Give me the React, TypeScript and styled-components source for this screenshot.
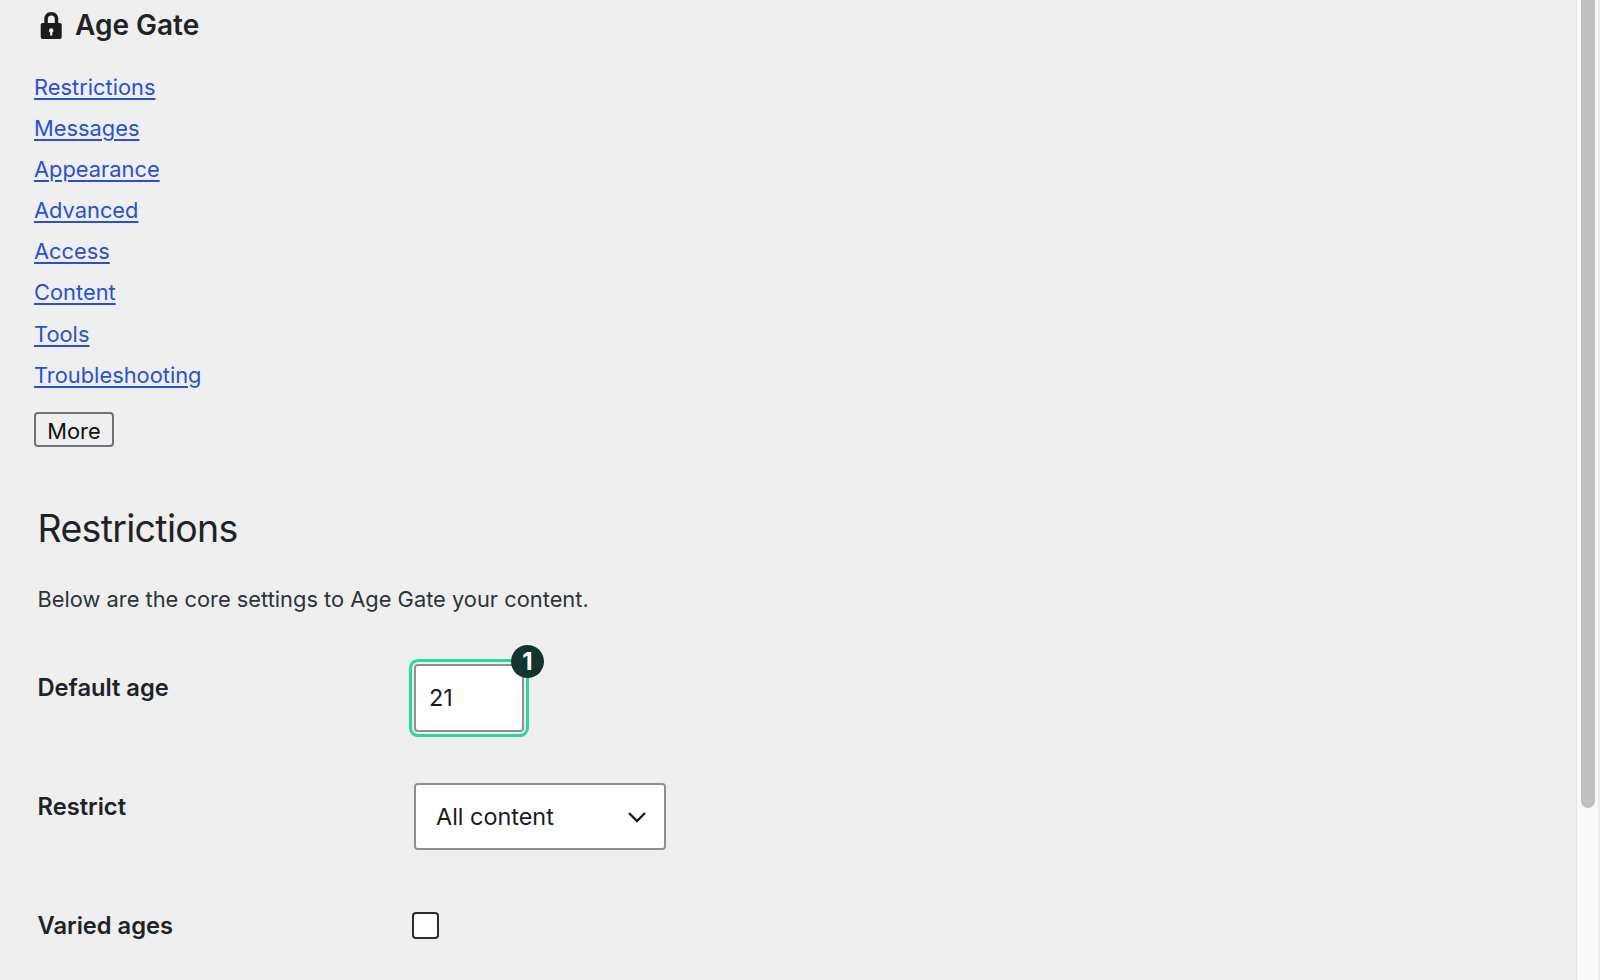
import React from "react";
import styled, { createGlobalStyle } from "styled-components";

const Global = createGlobalStyle`
  html, body { margin: 0; padding: 0; height: 100%; overflow: hidden; background: #efeff0; }
  body { font-family: Inter, "Liberation Sans", sans-serif; color: #1d2327; }
`;

const Page = styled.div`
  display: flex;
  width: 1600px;
  height: 980px;
  overflow: hidden;
  background: #efeff0;
`;

const Main = styled.main`
  flex: 1;
  min-width: 0;
  padding-top: 8px;
  padding-left: 34px;
`;

const Brand = styled.header`
  display: flex;
  align-items: center;
  gap: 12px;
  height: 34px;
  padding-left: 5px;
  margin-bottom: 25px;
`;

const BrandTitle = styled.h1`
  margin: 0;
  font-size: 28px;
  line-height: 34px;
  font-weight: 600;
  color: #1d2327;
`;

const NavList = styled.nav`
  display: flex;
  flex-direction: column;
  align-items: flex-start;
`;

const NavLink = styled.a`
  display: block;
  height: 41.1px;
  font-size: 21.85px;
  line-height: 41.1px;
  color: #2c4fd0;
  text-decoration: underline;
  text-underline-offset: 3px;
  text-decoration-thickness: 1.5px;
`;

const MoreButton = styled.button`
  display: block;
  box-sizing: border-box;
  width: 80px;
  height: 35px;
  margin-top: 16px;
  padding: 3px 0 0;
  font: 400 21.85px/28px Inter, sans-serif;
  color: #111;
  background: transparent;
  border: 2px solid #6f7276;
  border-radius: 4px;
`;

const Section = styled.section`
  padding-left: 3.5px;
  margin-top: 58px;
`;

const Heading = styled.h2`
  margin: 0;
  font-size: 37.5px;
  line-height: 48px;
  font-weight: 400;
  color: #1d2327;
  letter-spacing: -0.7px;
`;

const Lead = styled.p`
  margin: 31px 0 0;
  font-size: 21.85px;
  line-height: 30px;
  color: #2c3338;
`;

const FieldRow = styled.div<{ $top: number }>`
  display: grid;
  grid-template-columns: 376.5px auto;
  justify-content: start;
  align-items: start;
  margin-top: ${(p) => p.$top}px;
`;

const FieldLabel = styled.label<{ $drop?: number }>`
  padding-top: ${(p) => p.$drop ?? 0}px;
  font-size: 23.7px;
  line-height: 30px;
  font-weight: 600;
  color: #1d2327;
`;

const AgeField = styled.div`
  position: relative;
  width: 110px;
`;

const AgeInput = styled.div`
  box-sizing: border-box;
  width: 110px;
  height: 68px;
  padding-left: 13px;
  font-size: 23.4px;
  line-height: 64px;
  color: #1a1a1a;
  background: #fff;
  border: 2px solid #8c8f94;
  border-radius: 4px;
  box-shadow: 0 0 0 2px #efeff0, 0 0 0 5px #28d89c;
`;

const StepBadge = styled.span`
  position: absolute;
  top: -19px;
  right: -20px;
  width: 33px;
  height: 33px;
  border-radius: 50%;
  background: #12352c;
  color: #fff;
  font-size: 24px;
  line-height: 33px;
  font-weight: 700;
  text-align: center;
`;

const SelectBox = styled.div`
  box-sizing: border-box;
  display: flex;
  align-items: center;
  justify-content: space-between;
  width: 252px;
  height: 67px;
  padding: 0 17px 0 20px;
  font-size: 23.4px;
  color: #1a1a1a;
  background: #fff;
  border: 2px solid #8c8f94;
  border-radius: 4px;
`;

const Chevron = styled.svg`
  display: block;
  margin-top: 2px;
`;

const CheckBox = styled.span`
  display: block;
  box-sizing: border-box;
  width: 27px;
  height: 27px;
  margin: 1px 0 0 -2px;
  background: #fff;
  border: 2px solid #2a2d30;
  border-radius: 4px;
`;

const Scrollbar = styled.aside`
  flex: none;
  box-sizing: border-box;
  width: 24px;
  padding-left: 4px;
  padding-right: 3px;
  background: #f9f9f9;
  border-left: 1px solid #e4e4e4;
  border-right: 2px solid #ececec;
`;

const ScrollThumb = styled.div`
  height: 808px;
  background: #c0c0c0;
  border-radius: 0 0 7px 7px;
`;

const links = ["Restrictions", "Messages", "Appearance", "Advanced", "Access", "Content", "Tools", "Troubleshooting"];

export default function App() {
  return (
    <Page>
      <Global />
      <Main>
        <Brand>
          <svg width="24" height="28" viewBox="0 0 24 28" aria-hidden="true">
            <path fill="#1a1c1e" fillRule="evenodd" d="M12.300 1C8.200 1 5.300 3.800 5.300 8V12H3.700C2.600 12 1.700 12.900 1.700 14V26C1.700 27.100 2.600 28 3.700 28H20.700C21.800 28 22.700 27.100 22.700 26V14C22.700 12.900 21.800 12 20.700 12H19.300V8C19.300 3.800 16.400 1 12.300 1ZM8.800 12V8C8.800 5.800 10.200 4.400 12.300 4.400C14.400 4.400 15.800 5.800 15.800 8V12ZM12.200 17.200A2.300 2.300 0 0 1 13.300 21.500V24.500H11.100V21.500A2.300 2.300 0 0 1 12.200 17.200Z" />
          </svg>
          <BrandTitle>Age Gate</BrandTitle>
        </Brand>
        <NavList>
          {links.map((l) => (
            <NavLink key={l} href="#">{l}</NavLink>
          ))}
        </NavList>
        <MoreButton type="button">More</MoreButton>
        <Section>
          <Heading>Restrictions</Heading>
          <Lead>Below are the core settings to Age Gate your content.</Lead>
          <FieldRow $top={50}>
            <FieldLabel $drop={9}>Default age</FieldLabel>
            <AgeField>
              <AgeInput>21</AgeInput>
              <StepBadge>1</StepBadge>
            </AgeField>
          </FieldRow>
          <FieldRow $top={51}>
            <FieldLabel $drop={9}>Restrict</FieldLabel>
            <SelectBox>
              All content
              <Chevron width="20" height="12" viewBox="0 0 20 12" aria-hidden="true">
                <path d="M2 2l8 8 8-8" fill="none" stroke="#1a1a1a" strokeWidth="2.400" />
              </Chevron>
            </SelectBox>
          </FieldRow>
          <FieldRow $top={61}>
            <FieldLabel>Varied ages</FieldLabel>
            <CheckBox />
          </FieldRow>
        </Section>
      </Main>
      <Scrollbar>
        <ScrollThumb />
      </Scrollbar>
    </Page>
  );
}
